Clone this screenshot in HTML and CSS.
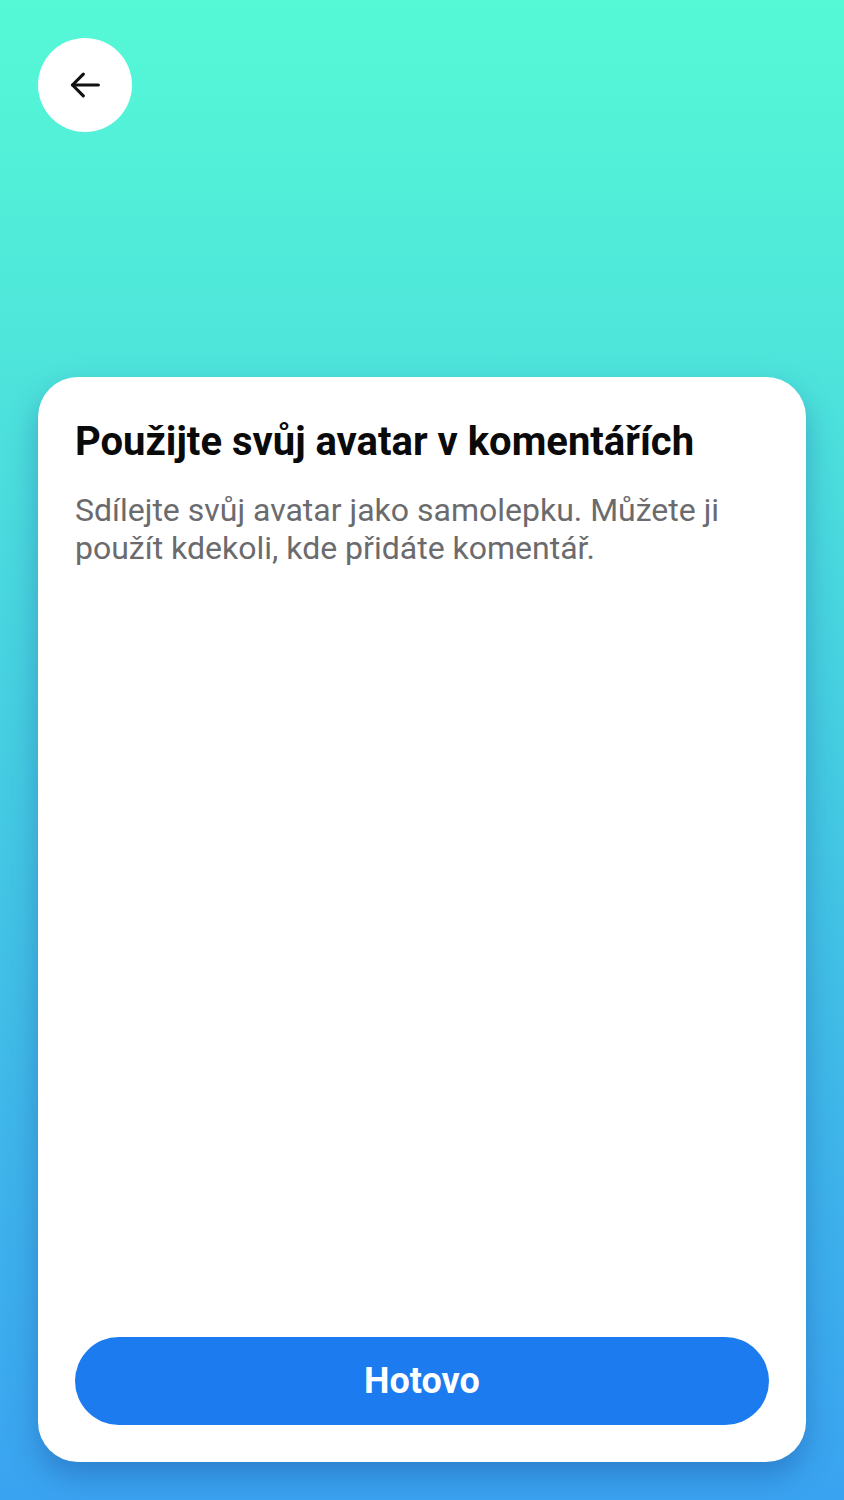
FILE: index.html
```html
<!DOCTYPE html>
<html lang="cs">

<head>
    <meta charset="UTF-8" />
    <meta name="viewport" content="width=device-width, initial-scale=1.0" />
    <title>Avatar</title>
    <link rel="stylesheet" href="styles.css">
</head>

<body>

    <header>
        <a href="#" class="back" aria-label="Zpět">
            <svg width="40" height="40" viewBox="0 0 24 24" fill="none" stroke="#111" stroke-width="1.9" stroke-linecap="round" stroke-linejoin="round">
                <path d="M20 12H4.5" />
                <path d="M11 5.5L4.5 12l6.5 6.5" />
            </svg>
        </a>
    </header>

    <main class="card">
        <h1>Použijte svůj avatar v komentářích</h1>
        <p>Sdílejte svůj avatar jako samolepku. Můžete ji použít kdekoli, kde přidáte komentář.</p>

        <button class="done">Hotovo</button>
    </main>

</body>

</html>
```

FILE: styles.css
```css
* {
    box-sizing: border-box;
    font-family: Roboto, 'Noto Sans', sans-serif;
}

body {
    margin: 0;
    width: 844px;
    height: 1500px;
    background: linear-gradient(180deg, #55f9d6 0%, #4fe8da 20%, #45cde2 50%, #3fb6ea 75%, #3aa3f1 100%);
    display: flex;
    flex-direction: column;
    padding: 38px 38px 38px;
}

header {
    height: 339px;
}

.back {
    width: 94px;
    height: 94px;
    border-radius: 50%;
    background-color: white;
    display: flex;
    align-items: center;
    justify-content: center;
}

.card {
    flex: 1;
    background-color: white;
    border-radius: 40px;
    padding: 40px 37px 37px;
    display: flex;
    flex-direction: column;
    box-shadow: 0 14px 30px rgba(20, 60, 140, 0.35);
}

.card h1 {
    margin: 0;
    font-size: 40px;
    font-weight: bold;
    color: #0a0a0a;
    line-height: 50px;
}

.card p {
    margin: 24px 0 0;
    font-size: 32px;
    line-height: 38px;
    color: #6b6b6e;
    padding-right: 20px;
}

.done {
    margin-top: auto;
    height: 88px;
    border: none;
    border-radius: 44px;
    background-color: #1b7bef;
    color: white;
    font-size: 36px;
    font-weight: bold;
    cursor: pointer;
}
```
